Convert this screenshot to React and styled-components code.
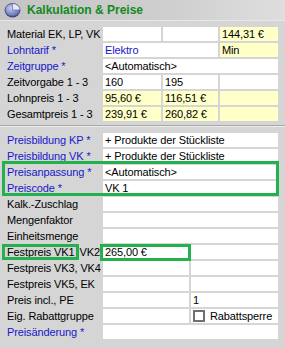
import React from "react";
import styled, { createGlobalStyle, css } from "styled-components";

const GlobalStyle = createGlobalStyle`
  html, body { margin: 0; padding: 0; background: #d5d5d5; }
  * { box-sizing: border-box; }
`;

const GREEN = "#22b14c";

const Panel = styled.div`
  width: 285px;
  height: 348px;
  background: #d5d5d5;
  font-family: "Liberation Sans", Arial, sans-serif;
  font-size: 11px;
  letter-spacing: -0.12px;
  color: #000;
  overflow: hidden;
`;

const Header = styled.div`
  height: 21px;
  display: flex;
  align-items: center;
  gap: 6px;
  padding-left: 4px;
  background: linear-gradient(to right, #c4c4c4, #cfcfcf 60%, #dedede);
  border-bottom: 1px solid #e6e6e6;
`;

const Title = styled.div`
  font-weight: bold;
  font-size: 12px;
  letter-spacing: 0;
  color: #128a1e;
`;

const Body = styled.div`
  padding: 6px 7px 0 0;
`;

const Row = styled.div`
  display: flex;
  height: 14px;
  margin-bottom: 2px;
`;

const Label = styled.div`
  width: 103px;
  flex: none;
  padding-left: 7px;
  padding-right: 3px;
  line-height: 14px;
  white-space: nowrap;
  color: ${(p) => (p.$required ? "#1818cc" : "#000")};
  display: flex;
  justify-content: space-between;
`;

const Fields = styled.div`
  width: 175px;
  display: grid;
  grid-template-columns: ${(p) => p.$cols};
  gap: 2px;
`;

const Field = styled.div`
  grid-column: span ${(p) => p.$span || 1};
  background: ${(p) => (p.$yellow ? "#ffffc8" : "#ffffff")};
  color: ${(p) => (p.$blue ? "#1818cc" : "#000")};
  padding-left: 2px;
  line-height: 14px;
  white-space: nowrap;
  overflow: hidden;
  display: flex;
  align-items: center;
  gap: 5px;
  position: relative;
  ${(p) =>
    p.$marked &&
    css`
      overflow: visible;
      &::after {
        content: "";
        position: absolute;
        left: -3px;
        right: -2px;
        top: -1px;
        bottom: -2px;
        border: 3px solid ${GREEN};
        pointer-events: none;
      }
    `}
`;

const Marked = styled.span`
  position: relative;
  &::after {
    content: "";
    position: absolute;
    left: -5px;
    right: -4px;
    top: -1px;
    bottom: -1px;
    border: 3px solid ${GREEN};
    pointer-events: none;
  }
`;

const Separator = styled.div`
  height: 2px;
  margin: 4px 0 6px 0;
  width: 285px;
  border-top: 1px solid #a9a9a9;
  border-bottom: 1px solid #ececec;
`;

const Group = styled.div`
  position: relative;
  &::after {
    content: "";
    position: absolute;
    left: 2px;
    right: -1px;
    top: -4px;
    bottom: -1px;
    border: 3px solid ${GREEN};
    pointer-events: none;
  }
`;

const Check = styled.span`
  width: 12px;
  height: 12px;
  flex: none;
  border: 2px solid #707070;
  background: #fff;
`;

const PieIcon = () => (
  <svg width="17" height="16" viewBox="0 0 17 16">
    <defs>
      <radialGradient id="pg" cx="40%" cy="35%" r="70%">
        <stop offset="0%" stopColor="#c8d0f0" />
        <stop offset="100%" stopColor="#5a64a8" />
      </radialGradient>
    </defs>
    <ellipse cx="8.5" cy="9" rx="7.5" ry="6.5" fill="#3b4070" />
    <ellipse cx="8.5" cy="8" rx="7.5" ry="6.5" fill="url(#pg)" stroke="#40487a" strokeWidth="0.8" />
    <path d="M8.5 8 L8.5 1.5 A7.5 6.5 0 0 1 16 8 Z" fill="#e4e8f8" stroke="#5a6098" strokeWidth="0.6" />
  </svg>
);

const C3 = "58px 55px 58px";
const C2 = "86px 87px";

export default function App() {
  return (
    <Panel>
      <GlobalStyle />
      <Header>
        <PieIcon />
        <Title>Kalkulation &amp; Preise</Title>
      </Header>
      <Body>
        <Row>
          <Label>Material EK, LP, VK</Label>
          <Fields $cols={C3}>
            <Field />
            <Field />
            <Field $yellow>144,31 €</Field>
          </Fields>
        </Row>
        <Row>
          <Label $required>Lohntarif *</Label>
          <Fields $cols={C3}>
            <Field $span={2} $blue>Elektro</Field>
            <Field $yellow>Min</Field>
          </Fields>
        </Row>
        <Row>
          <Label $required>Zeitgruppe *</Label>
          <Fields $cols={C3}>
            <Field $span={3}>&lt;Automatisch&gt;</Field>
          </Fields>
        </Row>
        <Row>
          <Label>Zeitvorgabe 1 - 3</Label>
          <Fields $cols={C3}>
            <Field>160</Field>
            <Field>195</Field>
            <Field />
          </Fields>
        </Row>
        <Row>
          <Label>Lohnpreis 1 - 3</Label>
          <Fields $cols={C3}>
            <Field $yellow>95,60 €</Field>
            <Field $yellow>116,51 €</Field>
            <Field $yellow />
          </Fields>
        </Row>
        <Row>
          <Label>Gesamtpreis 1 - 3</Label>
          <Fields $cols={C3}>
            <Field $yellow>239,91 €</Field>
            <Field $yellow>260,82 €</Field>
            <Field $yellow />
          </Fields>
        </Row>

        <Separator />

        <Row>
          <Label $required>Preisbildung KP *</Label>
          <Fields $cols={C2}>
            <Field $span={2}>+ Produkte der Stückliste</Field>
          </Fields>
        </Row>
        <Row>
          <Label $required>Preisbildung VK *</Label>
          <Fields $cols={C2}>
            <Field $span={2}>+ Produkte der Stückliste</Field>
          </Fields>
        </Row>
        <Group>
          <Row>
            <Label $required>Preisanpassung *</Label>
            <Fields $cols={C2}>
              <Field $span={2}>&lt;Automatisch&gt;</Field>
            </Fields>
          </Row>
          <Row>
            <Label $required>Preiscode *</Label>
            <Fields $cols={C2}>
              <Field $span={2}>VK 1</Field>
            </Fields>
          </Row>
        </Group>
        <Row>
          <Label>Kalk.-Zuschlag</Label>
          <Fields $cols={C2}>
            <Field $span={2} />
          </Fields>
        </Row>
        <Row>
          <Label>Mengenfaktor</Label>
          <Fields $cols={C2}>
            <Field $span={2} />
          </Fields>
        </Row>
        <Row>
          <Label>Einheitsmenge</Label>
          <Fields $cols={C2}>
            <Field $span={2} />
          </Fields>
        </Row>
        <Row>
          <Label>
            <Marked>Festpreis VK1</Marked>
            <span>VK2</span>
          </Label>
          <Fields $cols={C2}>
            <Field $marked>265,00 €</Field>
            <Field />
          </Fields>
        </Row>
        <Row>
          <Label>Festpreis VK3, VK4</Label>
          <Fields $cols={C2}>
            <Field />
            <Field />
          </Fields>
        </Row>
        <Row>
          <Label>Festpreis VK5, EK</Label>
          <Fields $cols={C2}>
            <Field />
            <Field />
          </Fields>
        </Row>
        <Row>
          <Label>Preis incl., PE</Label>
          <Fields $cols={C2}>
            <Field />
            <Field>1</Field>
          </Fields>
        </Row>
        <Row>
          <Label>Eig. Rabattgruppe</Label>
          <Fields $cols={C2}>
            <Field />
            <Field>
              <Check />
              Rabattsperre
            </Field>
          </Fields>
        </Row>
        <Row>
          <Label $required>Preisänderung *</Label>
          <Fields $cols={C2}>
            <Field $span={2} />
          </Fields>
        </Row>
      </Body>
    </Panel>
  );
}
